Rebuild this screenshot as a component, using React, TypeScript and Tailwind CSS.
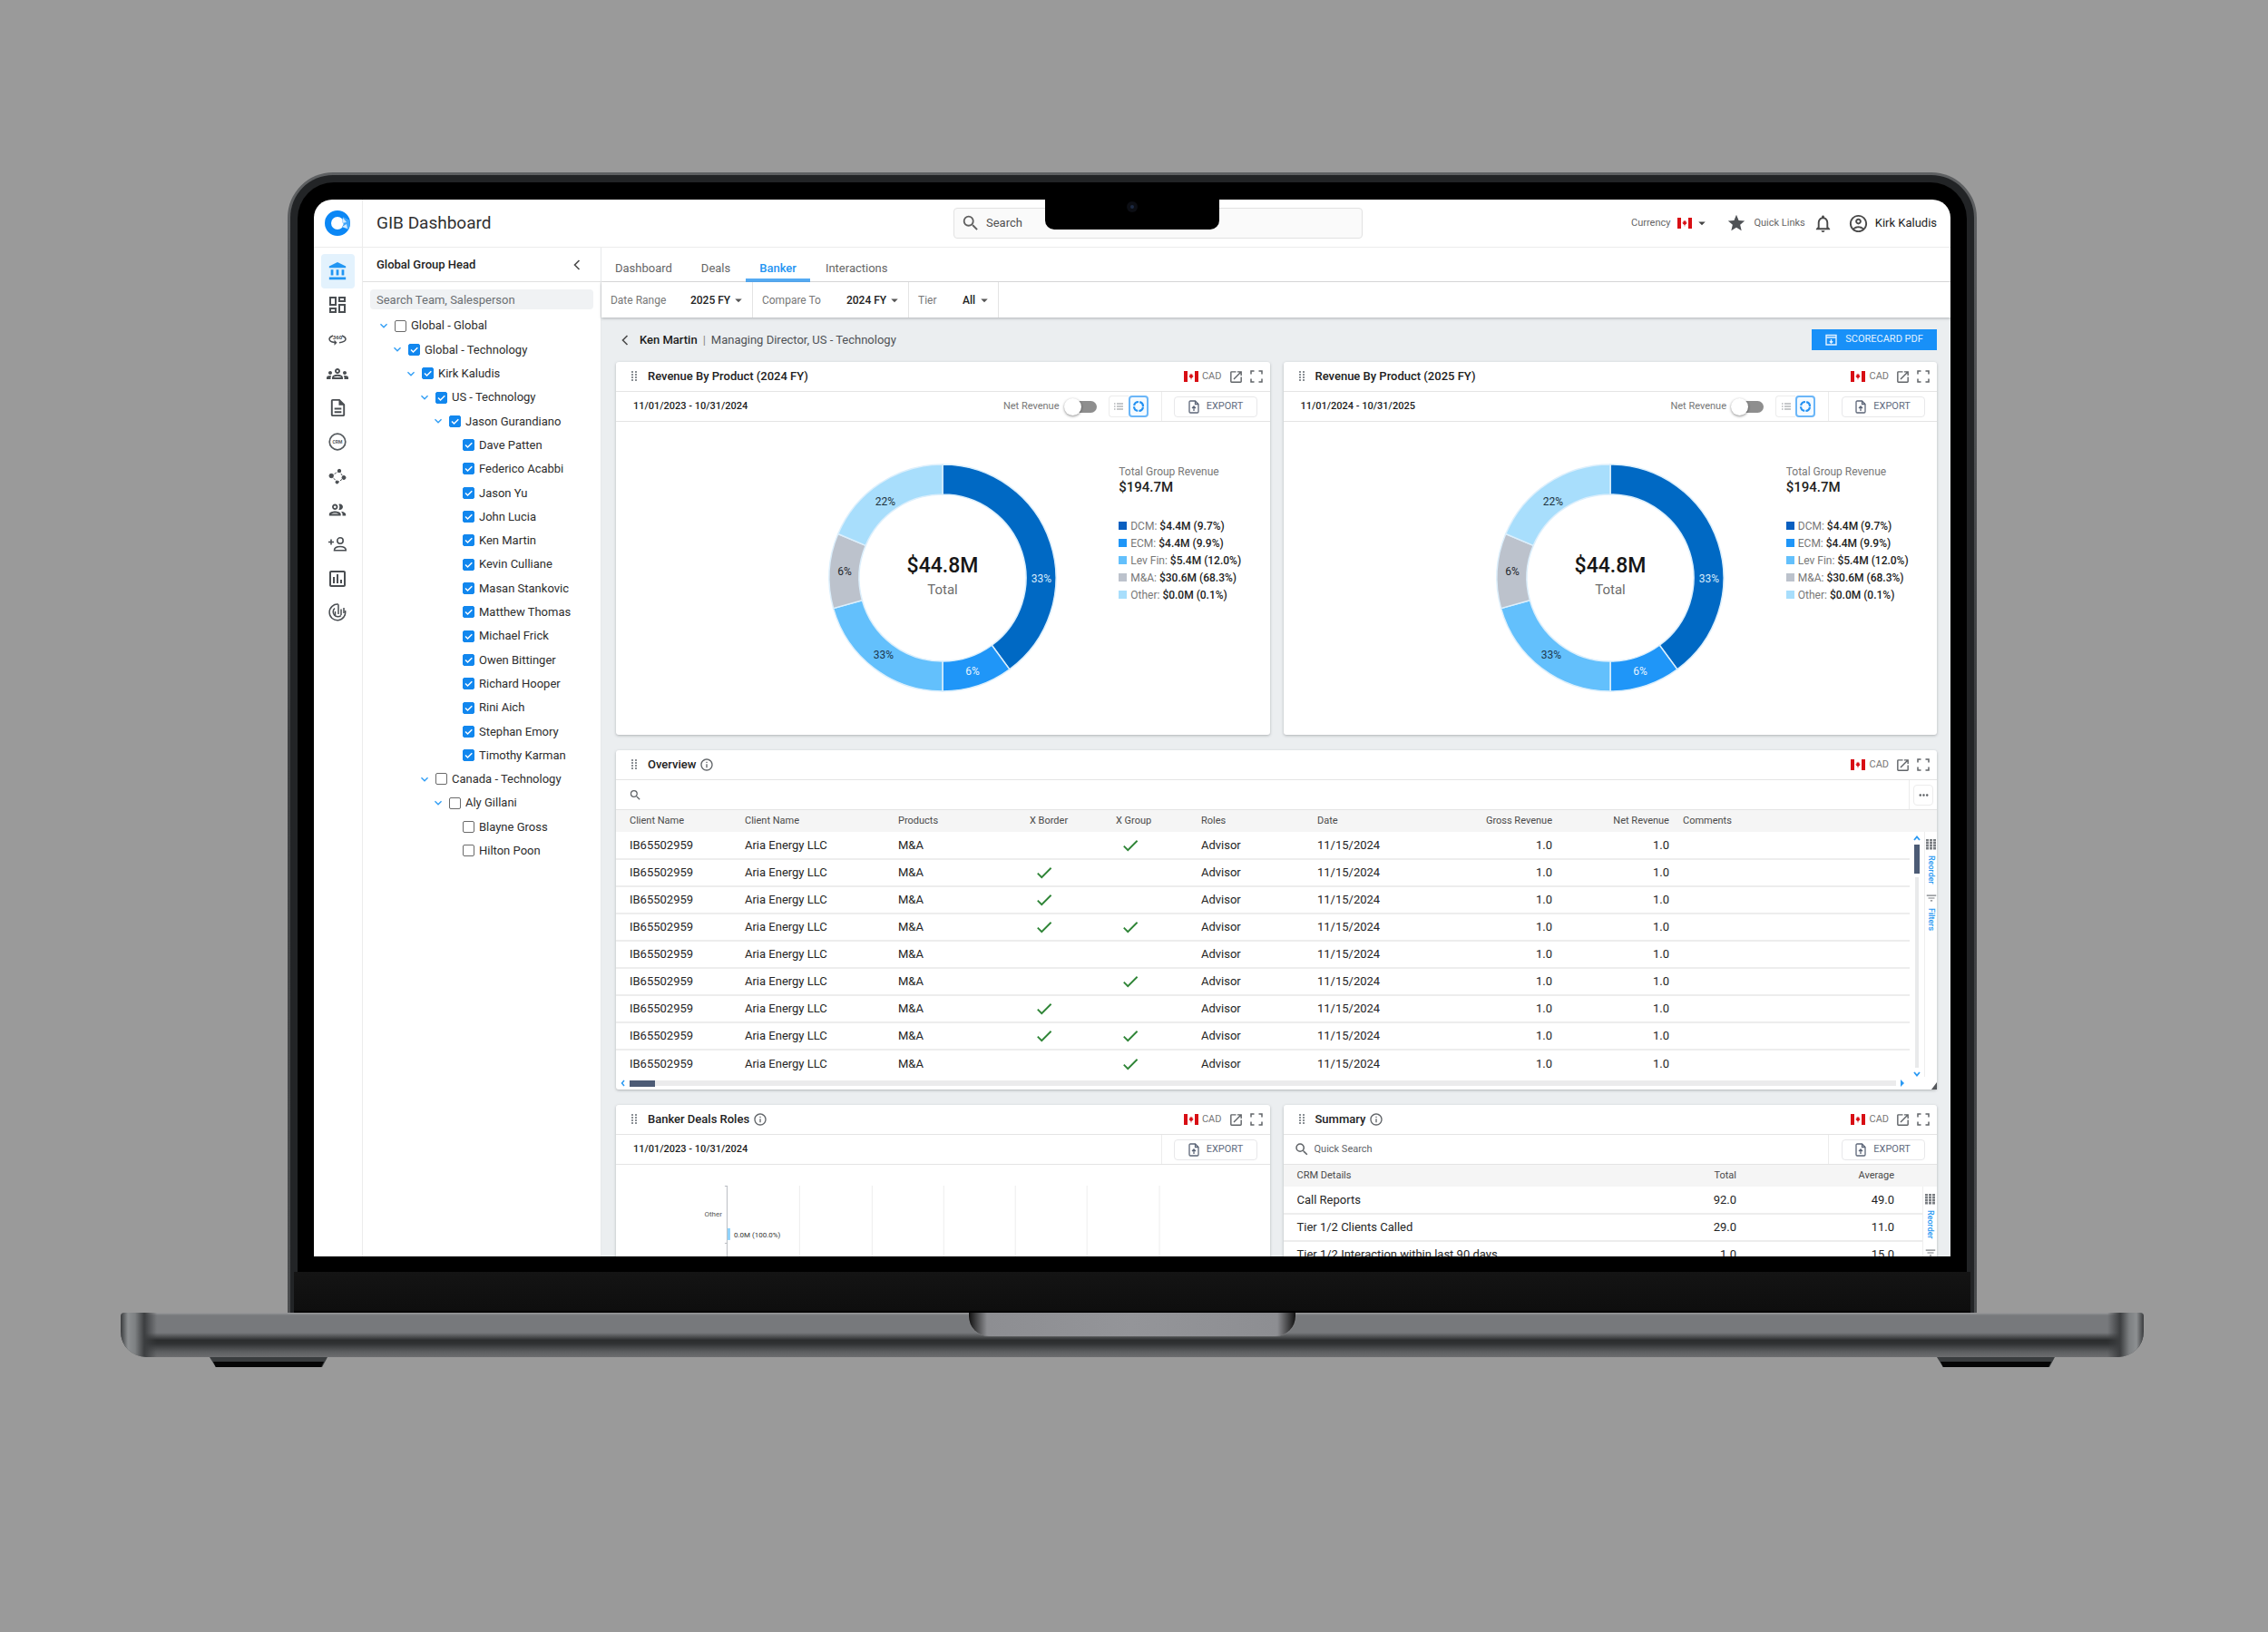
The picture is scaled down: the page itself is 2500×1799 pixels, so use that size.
import type { ReactNode } from "react";
import {
  MdAccountBalance,
  MdArrowDropDown,
  MdCheck,
  MdFilterList,
  MdKeyboardArrowDown,
  MdMoreHoriz,
  MdNotificationsNone,
  MdOpenInNew,
  MdOutlineAccountCircle,
  MdOutlineDashboard,
  MdOutlineDescription,
  MdOutlineGroup,
  MdOutlineGroups,
  MdOutlineInfo,
  MdOutlineInsertChart,
  MdSearch,
  MdStar,
} from "react-icons/md";

/* ---------- icons ---------- */

function Logo() {
  return (
    <svg viewBox="0 0 28 28" className="size-7">
      <circle cx="14" cy="14" r="10.500" fill="none" stroke="#0b87f5" strokeWidth="7" />
      <path d="M20 7l7 3.500a14 14 0 0 1-1 11L19 18l2-3-2-2z" fill="#3fa5fa" />
      <path d="M20 8l4 5-5 1zM19 18l5-3 1 5z" fill="#d3eafe" />
    </svg>
  );
}

function Flag() {
  return (
    <svg viewBox="0 0 16 12" className="h-3 w-4 shrink-0" aria-label="Canada">
      <path d="M0 0h16v12H0z" fill="#fff" />
      <path d="M0 0h4v12H0zM12 0h4v12h-4z" fill="#d80e14" />
      <path d="M8 2.500l.8 1.500.9-.4-.3 2 1.100-.5-.4 1.400L8.300 8v1.500h-.6V8L5.900 6.500l-.4-1.400 1.100.5-.3-2 .9.400z" fill="#d80e14" />
    </svg>
  );
}

function DragHandle() {
  return (
    <svg viewBox="0 0 6 12" className="h-3 w-1.5 shrink-0" fill="#8a8f94">
      {[0, 3, 6, 9].map((y) => (
        <g key={y}>
          <rect x="0" y={y} width="2" height="2" />
          <rect x="4" y={y} width="2" height="2" />
        </g>
      ))}
    </svg>
  );
}

function ChevronLeft({ className }: { className: string }) {
  return (
    <svg viewBox="0 0 8 12" className={className} fill="none" stroke="#4a4a4a" strokeWidth="1.600">
      <path d="M6.500 1L1.500 6l5 5" />
    </svg>
  );
}

function FullscreenIcon() {
  return (
    <svg viewBox="0 0 14 14" className="size-3.5" fill="none" stroke="#606468" strokeWidth="1.500">
      <path d="M1 4.500V1h3.500M9.500 1H13v3.500M13 9.500V13H9.500M4.500 13H1V9.500" />
    </svg>
  );
}

function ExportIcon() {
  return (
    <svg viewBox="0 0 12 15" className="h-[15px] w-3" fill="none" stroke="#5c6678" strokeWidth="1.300">
      <path d="M7.500 1H2.200C1.500 1 1 1.500 1 2.200v10.600c0 .7.500 1.200 1.200 1.200h7.600c.7 0 1.200-.5 1.200-1.200V4.500z" />
      <path d="M7.500 1v3.500H11M6 12V7M4 9l2-2 2 2" />
    </svg>
  );
}

function View360Icon() {
  return (
    <svg viewBox="0 0 20 14" className="h-3.5 w-5" fill="none" stroke="#4a4e52" strokeWidth="1.500">
      <path d="M5 3C2.500 4 1 5.300 1 6.700c0 1.800 2.500 3.300 6 3.900M15 3c2.500 1 4 2.300 4 3.700 0 1.900-3 3.500-7 4" />
      <path d="M6.500 7.500l3 3.200-3 3z" fill="#4a4e52" stroke="none" />
      <text x="10" y="6.500" textAnchor="middle" fontSize="6" fontWeight="700" fontFamily="Roboto, sans-serif" fill="#4a4e52" stroke="none">
        360
      </text>
    </svg>
  );
}

function CrmIcon() {
  return (
    <svg viewBox="0 0 20 20" className="size-5" fill="none" stroke="#555a5e" strokeWidth="1.700">
      <circle cx="10" cy="10" r="8.800" />
      <text x="10" y="12" textAnchor="middle" fontSize="5" fontWeight="700" fontFamily="Roboto, sans-serif" fill="#555a5e" stroke="none">
        CRM
      </text>
    </svg>
  );
}

function NetworkIcon() {
  return (
    <svg viewBox="0 0 20 18" className="h-[18px] w-5" fill="#4a4e52" stroke="#4a4e52">
      <path d="M3.500 8.500L12 3M3.500 8.500L10 16M12 3l5 8M10 16l7-5" fill="none" strokeWidth="1" strokeDasharray="2.500 1.200" />
      <circle cx="3.200" cy="8.500" r="2.200" />
      <circle cx="12" cy="3" r="1.700" />
      <circle cx="17" cy="10.500" r="2" />
      <circle cx="9.500" cy="15.500" r="1.500" />
    </svg>
  );
}

function AddPersonIcon() {
  return (
    <svg viewBox="0 0 20 18" className="h-[18px] w-5" fill="none" stroke="#4a4e52" strokeWidth="1.600">
      <circle cx="13" cy="5" r="3.200" />
      <path d="M6.500 15.800c0-3 3-4.300 6.500-4.300s6.300 1.300 6.300 4.300z" />
      <path d="M3 3.500v6M0 6.500h6" />
    </svg>
  );
}

function RadarIcon() {
  return (
    <svg viewBox="0 0 20 20" className="size-5" fill="none" stroke="#4a4e52" strokeWidth="1.500">
      <path d="M11 1.200A8.800 8.800 0 1 0 18.500 8M11 1.200V12" />
      <path d="M7 5.500a5.300 5.300 0 1 0 7 8M7.500 13V9M14 13V6.500M17 11V5" />
    </svg>
  );
}

function ReorderIcon() {
  return (
    <svg viewBox="0 0 12 12" className="size-3" fill="#7b7f83">
      {[0, 4, 8].map((x) =>
        [0, 3, 6, 9].map((y) => <rect key={`${x}-${y}`} x={x} y={y} width="3" height="2.500" />)
      )}
    </svg>
  );
}

/* ---------- data ---------- */

type Node = { name: string; level: number; checked: boolean; branch?: boolean };

const tree: Node[] = [
  { name: "Global - Global", level: 0, checked: false, branch: true },
  { name: "Global - Technology", level: 1, checked: true, branch: true },
  { name: "Kirk Kaludis", level: 2, checked: true, branch: true },
  { name: "US - Technology", level: 3, checked: true, branch: true },
  { name: "Jason Gurandiano", level: 4, checked: true, branch: true },
  ...[
    "Dave Patten",
    "Federico Acabbi",
    "Jason Yu",
    "John Lucia",
    "Ken Martin",
    "Kevin Culliane",
    "Masan Stankovic",
    "Matthew Thomas",
    "Michael Frick",
    "Owen Bittinger",
    "Richard Hooper",
    "Rini Aich",
    "Stephan Emory",
    "Timothy Karman",
  ].map((name) => ({ name, level: 5, checked: true })),
  { name: "Canada - Technology", level: 3, checked: false, branch: true },
  { name: "Aly Gillani", level: 4, checked: false, branch: true },
  { name: "Blayne Gross", level: 5, checked: false },
  { name: "Hilton Poon", level: 5, checked: false },
];

const deals = [
  [false, true],
  [true, false],
  [true, false],
  [true, true],
  [false, false],
  [false, true],
  [true, false],
  [true, true],
  [false, true],
];

const slices = [
  { from: 0, to: 143.8, color: "#0069c4" },
  { from: 143.8, to: 180, color: "#1f96f8" },
  { from: 180, to: 254.4, color: "#63c0fc" },
  { from: 254.4, to: 292.8, color: "#bcc2cc" },
  { from: 292.8, to: 360, color: "#a8defc" },
];

const sliceLabels = [
  { x: 234, y: 130, text: "33%", color: "#d5eafc" },
  { x: 158, y: 232, text: "6%", color: "#e4f3ff" },
  { x: 60, y: 214, text: "33%", color: "#1d3a52" },
  { x: 17, y: 122, text: "6%", color: "#25292e" },
  { x: 62, y: 45, text: "22%", color: "#1d3340" },
];

const legend = [
  { label: "DCM:", value: "$4.4M (9.7%)", swatch: "bg-[#0a5fc0]" },
  { label: "ECM:", value: "$4.4M (9.9%)", swatch: "bg-[#1f96f8]" },
  { label: "Lev Fin:", value: "$5.4M (12.0%)", swatch: "bg-[#63c0fc]" },
  { label: "M&A:", value: "$30.6M (68.3%)", swatch: "bg-[#bcc2cc]" },
  { label: "Other:", value: "$0.0M (0.1%)", swatch: "bg-[#a8defc]" },
];

/* ---------- header ---------- */

function TopBar() {
  return (
    <header className="flex h-[53px] shrink-0 items-stretch border-b border-[#ececec]">
      <div className="flex w-[54px] shrink-0 items-center justify-center border-r border-[#ececec]">
        <Logo />
      </div>
      <h1 className="flex w-[651px] shrink-0 items-center pl-[15px] text-[19px] text-[#303030]">GIB Dashboard</h1>
      <label className="flex h-[34px] w-[451px] items-center gap-1.5 self-center rounded-sm border border-[#e2e2e2] bg-[#fafafa] pl-[7px]">
        <MdSearch className="size-[22px] shrink-0 text-[#606060]" />
        <input
          type="text"
          placeholder="Search"
          aria-label="Search"
          className="w-full bg-transparent text-[13px] outline-none placeholder:text-[#505050]"
        />
      </label>
      <div className="ml-auto flex items-center pr-[15px] text-[11px] text-[#666]">
        <button className="flex items-center gap-2">
          Currency
          <span className="flex items-center">
            <Flag />
            <MdArrowDropDown className="ml-0.5 size-[18px] text-[#444]" />
          </span>
        </button>
        <button className="ml-[18px] flex items-center gap-2">
          <MdStar className="size-[22px] text-[#4f5256]" />
          Quick Links
        </button>
        <button aria-label="Notifications" className="ml-2">
          <MdNotificationsNone className="size-[23px] text-[#4a4a4a]" />
        </button>
        <button className="ml-4 flex items-center gap-[7px] text-[13px] text-[#222]">
          <MdOutlineAccountCircle className="size-[23px] text-[#4a4a4a]" />
          Kirk Kaludis
        </button>
      </div>
    </header>
  );
}

const railItems: { name: string; icon: ReactNode }[] = [
  { name: "Bank", icon: <MdAccountBalance className="size-[22px] text-[#2196f3]" /> },
  { name: "Dashboard", icon: <MdOutlineDashboard className="size-6" /> },
  { name: "Client 360", icon: <View360Icon /> },
  { name: "Teams", icon: <MdOutlineGroups className="size-6" /> },
  { name: "Documents", icon: <MdOutlineDescription className="size-[23px]" /> },
  { name: "CRM", icon: <CrmIcon /> },
  { name: "Network", icon: <NetworkIcon /> },
  { name: "People", icon: <MdOutlineGroup className="size-[22px]" /> },
  { name: "Add contact", icon: <AddPersonIcon /> },
  { name: "Reports", icon: <MdOutlineInsertChart className="size-6" /> },
  { name: "Insights", icon: <RadarIcon /> },
];

function Rail() {
  return (
    <nav aria-label="Main" className="w-[54px] shrink-0 border-r border-[#ececec] px-2 pt-[7px]">
      <div className="grid h-[414px] auto-rows-fr">
        {railItems.map((item, i) => (
          <button
            key={item.name}
            aria-label={item.name}
            className={
              i === 0
                ? "flex items-center justify-center rounded bg-[#e3f2fd]"
                : "flex items-center justify-center text-[#4a4e52]"
            }
          >
            {item.icon}
          </button>
        ))}
      </div>
    </nav>
  );
}

const indents = ["pl-[15px]", "pl-[30px]", "pl-[45px]", "pl-[60px]", "pl-[75px]", "pl-[90px]"];

function Sidebar() {
  return (
    <aside className="w-[262px] shrink-0">
      <div className="flex h-[38px] items-center justify-between border-b border-[#e0e0e0] pl-[15px] pr-[22px]">
        <h2 className="text-[13px] font-medium text-[#222]">Global Group Head</h2>
        <button aria-label="Collapse">
          <ChevronLeft className="h-3 w-2" />
        </button>
      </div>
      <div className="px-2 pt-2 pb-[5px]">
        <input
          type="text"
          placeholder="Search Team, Salesperson"
          aria-label="Search Team, Salesperson"
          className="block h-[22px] w-full rounded-sm bg-[#f0f2f4] px-[7px] text-[13px] outline-none placeholder:text-[#6b6f73]"
        />
      </div>
      <div className="grid h-[605px] auto-rows-fr">
        {tree.map((n) => (
          <div key={n.name} className={`flex items-center ${indents[n.level]}`}>
            <span className="w-5 shrink-0">
              {n.branch && (
                <button aria-label={`Toggle ${n.name}`} className="block">
                  <MdKeyboardArrowDown className="size-4 text-[#2f9df5]" />
                </button>
              )}
            </span>
            <label className="flex items-center gap-[5px] text-[13px] text-[#2d2d2d]">
              <span className="relative size-[13px]">
                <input
                  type="checkbox"
                  defaultChecked={n.checked}
                  className="peer block size-[13px] appearance-none rounded-[2px] border-[1.5px] border-[#6a6a6a] checked:border-[#1287ee] checked:bg-[#1287ee]"
                />
                <svg
                  viewBox="0 0 13 13"
                  className="pointer-events-none absolute inset-0 hidden size-[13px] peer-checked:block"
                  fill="none"
                  stroke="#fff"
                  strokeWidth="1.500"
                >
                  <path d="M3 6.500L5.500 9 10.300 4.200" />
                </svg>
              </span>
              {n.name}
            </label>
          </div>
        ))}
      </div>
    </aside>
  );
}

/* ---------- cards ---------- */

function Card({
  title,
  info,
  toolbar,
  children,
}: {
  title: string;
  info?: boolean;
  toolbar: ReactNode;
  children: ReactNode;
}) {
  return (
    <section className="rounded-[3px] bg-white shadow-[0_1px_3px_rgba(60,65,70,0.350)]">
      <div className="flex h-[33px] items-center border-b border-[#e4e4e4] pl-[17px] pr-2">
        <DragHandle />
        <h3 className="ml-3 text-[13px] font-medium text-[#222]">{title}</h3>
        {info && <MdOutlineInfo className="ml-1 size-4 text-[#606468]" />}
        <div className="ml-auto flex items-center text-[11px] text-[#777]">
          <Flag />
          <span className="ml-1">CAD</span>
          <button aria-label="Open in new window" className="ml-[7px]">
            <MdOpenInNew className="size-[17px] text-[#606468]" />
          </button>
          <button aria-label="Full screen" className="ml-[7px]">
            <FullscreenIcon />
          </button>
        </div>
      </div>
      <div className="flex h-[33px] items-stretch border-b border-[#e4e4e4]">{toolbar}</div>
      {children}
    </section>
  );
}

function ExportCell() {
  return (
    <div className="flex w-[120px] shrink-0 items-center justify-center border-l border-[#ececec]">
      <button className="flex h-[23px] w-[92px] items-center justify-center gap-2 rounded-sm border border-[#e8e8ea] text-[11px] text-[#5f6b80]">
        <ExportIcon />
        EXPORT
      </button>
    </div>
  );
}

function DateText({ children }: { children: ReactNode }) {
  return <div className="flex flex-1 items-center pl-[19px] text-[11px] font-medium text-[#1c1c1c]">{children}</div>;
}

function arc(from: number, to: number) {
  const pt = (deg: number, r: number) => {
    const a = ((deg - 90) * Math.PI) / 180;
    return `${125 + r * Math.cos(a)} ${125 + r * Math.sin(a)}`;
  };
  const large = to - from > 180 ? 1 : 0;
  return `M${pt(from, 125)}A125 125 0 ${large} 1 ${pt(to, 125)}L${pt(to, 92)}A92 92 0 ${large} 0 ${pt(from, 92)}Z`;
}

function Donut() {
  return (
    <svg viewBox="0 0 250 250" className="h-[250px] w-full overflow-visible" fontFamily="Roboto, sans-serif" textAnchor="middle">
      {slices.map((s) => (
        <path key={s.from} d={arc(s.from, s.to)} fill={s.color} stroke="#dceffc" strokeWidth="1.500" />
      ))}
      {sliceLabels.map((l) => (
        <text key={`${l.x}`} x={l.x} y={l.y} fontSize="12" fill={l.color}>
          {l.text}
        </text>
      ))}
      <text x="125" y="119" fontSize="23" fontWeight="500" fill="#161616">
        $44.8M
      </text>
      <text x="125" y="143" fontSize="15" fill="#6c6c6c">
        Total
      </text>
    </svg>
  );
}

function RevenueCard({ title, range }: { title: string; range: string }) {
  return (
    <Card
      title={title}
      toolbar={
        <>
          <DateText>{range}</DateText>
          <label className="flex items-center gap-[11px] text-[11px] text-[#777]">
            Net Revenue
            <input
              type="checkbox"
              role="switch"
              className="relative mr-[13px] h-[13px] w-[30px] appearance-none rounded-full bg-[#8e8e8e] before:absolute before:-top-[3px] before:-left-[6px] before:size-[19px] before:rounded-full before:bg-white before:shadow-[0_1px_3px_rgba(0,0,0,0.450)]"
            />
          </label>
          <div className="mr-[14px] flex items-center">
            <button
              aria-label="List view"
              className="flex h-6 w-[22px] items-center justify-center rounded-l-sm border border-r-0 border-[#ececec]"
            >
              <svg viewBox="0 0 10 8" className="h-2 w-2.5" stroke="#8d9196" strokeWidth="1.200">
                <path d="M0 1h1.500M3 1h7M0 4h1.500M3 4h7M0 7h1.500M3 7h7" />
              </svg>
            </button>
            <button
              aria-label="Chart view"
              className="flex h-6 w-[22px] items-center justify-center rounded-sm border-2 border-[#6bb6f8] bg-[#f4faff]"
            >
              <svg viewBox="0 0 14 14" className="size-3.5" fill="none" stroke="#2391f2" strokeWidth="2.200">
                <circle cx="7" cy="7" r="5" strokeDasharray="6.600 1.254" strokeDashoffset="7.227" />
              </svg>
            </button>
          </div>
          <ExportCell />
        </>
      }
    >
      <div className="grid grid-cols-[1fr_250px_1fr] pt-[47px] pb-12">
        <div className="col-start-2">
          <Donut />
        </div>
        <div className="pl-[69px]">
          <p className="text-[12px] leading-4 text-[#777]">Total Group Revenue</p>
          <p className="text-[15px] leading-[18px] font-medium text-[#222]">$194.7M</p>
          <ul className="mt-6">
            {legend.map((l) => (
              <li key={l.label} className="flex h-[19px] items-center text-[12px] whitespace-nowrap text-[#777]">
                <span className={`mr-1 size-[9px] ${l.swatch}`} />
                {l.label}
                <span className="ml-[3px] font-medium text-[#222]">{l.value}</span>
              </li>
            ))}
          </ul>
        </div>
      </div>
    </Card>
  );
}

function SideTools() {
  return (
    <div className="flex w-4 flex-col items-center border-l border-[#eee] pt-2 text-[9px] font-medium text-[#2b9af3]">
      <ReorderIcon />
      <button className="mt-1.5 leading-none [writing-mode:vertical-rl]">Reorder</button>
      <MdFilterList className="mt-2 size-[14px] text-[#7b7f83]" />
      <button className="mt-1 leading-none [writing-mode:vertical-rl]">Filters</button>
    </div>
  );
}

const headClass = "pl-[15px] text-left font-normal";

function Overview() {
  return (
    <Card
      title="Overview"
      info
      toolbar={
        <>
          <label className="flex flex-1 items-center pl-3.5">
            <MdSearch className="size-[15px] text-[#606468]" />
            <input type="text" aria-label="Search overview" className="ml-2 w-full bg-transparent text-[13px] outline-none" />
          </label>
          <div className="flex w-[31px] items-center justify-center border-l border-[#ececec]">
            <button aria-label="More" className="flex h-[23px] w-[22px] items-center justify-center rounded-sm border border-[#ececec]">
              <MdMoreHoriz className="size-[15px] text-[#606468]" />
            </button>
          </div>
        </>
      }
    >
      <div className="grid grid-cols-[1fr_16px_14px]">
        <table className="w-full table-fixed border-collapse">
          <colgroup>
            <col className="w-[127px]" />
            <col className="w-[169px]" />
            <col className="w-[145px]" />
            <col className="w-[95px]" />
            <col className="w-[94px]" />
            <col className="w-[128px]" />
            <col className="w-[144px]" />
            <col className="w-[130px]" />
            <col className="w-[129px]" />
            <col />
          </colgroup>
          <thead>
            <tr className="h-6 bg-[#f5f5f5] text-[11px] text-[#4a4a4a]">
              <th className={headClass}>Client Name</th>
              <th className={headClass}>Client Name</th>
              <th className={headClass}>Products</th>
              <th className={headClass}>X Border</th>
              <th className={headClass}>X Group</th>
              <th className={headClass}>Roles</th>
              <th className={headClass}>Date</th>
              <th className="text-right font-normal">Gross Revenue</th>
              <th className="text-right font-normal">Net Revenue</th>
              <th className={headClass}>Comments</th>
            </tr>
          </thead>
          <tbody className="text-[13px] text-[#252525]">
            {deals.map(([border, group], i) => (
              <tr key={i} className={i < deals.length - 1 ? "h-[30px] border-b-2 border-[#ededed]" : "h-[30px]"}>
                <td className="pl-[15px]">IB65502959</td>
                <td className="pl-[15px]">Aria Energy LLC</td>
                <td className="pl-[15px]">M&amp;A</td>
                <td className="pl-5">{border && <MdCheck aria-label="Yes" className="size-[22px] text-[#2e8436]" />}</td>
                <td className="pl-5">{group && <MdCheck aria-label="Yes" className="size-[22px] text-[#2e8436]" />}</td>
                <td className="pl-[15px]">Advisor</td>
                <td className="pl-[15px]">11/15/2024</td>
                <td className="text-right">1.0</td>
                <td className="text-right">1.0</td>
                <td />
              </tr>
            ))}
          </tbody>
        </table>
        <div className="flex flex-col">
          <div className="h-6 bg-[#f5f5f5]" />
          <div className="flex flex-1 flex-col items-center pt-1">
            <svg viewBox="0 0 8 6" className="h-1.5 w-2" fill="none" stroke="#2b9af3" strokeWidth="1.800">
              <path d="M1 5l3-3.500L7 5" />
            </svg>
            <div className="mt-1 h-8 w-1.5 bg-[#4c5b75]" />
            <div className="mt-1 w-1 flex-1 bg-[#e9eaeb]" />
            <svg viewBox="0 0 8 6" className="mt-1 h-1.5 w-2" fill="none" stroke="#2b9af3" strokeWidth="1.800">
              <path d="M1 1l3 3.500L7 1" />
            </svg>
          </div>
        </div>
        <div className="flex flex-col">
          <div className="h-6 bg-[#f5f5f5]" />
          <div className="flex flex-1 justify-center">
            <SideTools />
          </div>
        </div>
      </div>
      <div className="flex h-[14px] items-center pl-[5px]">
        <svg viewBox="0 0 5 8" className="h-2 w-[5px]" fill="none" stroke="#2b9af3" strokeWidth="1.500">
          <path d="M4 1L1.500 4 4 7" />
        </svg>
        <div className="ml-[5px] h-[7px] w-7 bg-[#4c5b75]" />
        <div className="h-1.5 flex-1 bg-[#ebebec]" />
        <svg viewBox="0 0 5 8" className="ml-1 h-2 w-[5px]" fill="#2b9af3">
          <path d="M1 0l4 4-4 4z" />
        </svg>
        <svg viewBox="0 0 6 8" className="ml-[30px] h-2 w-1.5 self-end" fill="#55585c">
          <path d="M6 0v8H0z" />
        </svg>
      </div>
    </Card>
  );
}

function DealRoles() {
  return (
    <Card
      title="Banker Deals Roles"
      info
      toolbar={
        <>
          <DateText>11/01/2023 - 10/31/2024</DateText>
          <ExportCell />
        </>
      }
    >
      <svg viewBox="0 0 721 250" className="block w-full" fontFamily="Roboto, sans-serif" fontSize="8">
        {[202, 282, 361, 440, 519, 599].map((x) => (
          <path key={x} d={`M${x}.500 23V250`} stroke="#ededed" />
        ))}
        <path d="M122.500 23V250M120 23.500h3M120 86.500h3" stroke="#b9bdc2" fill="none" />
        <text x="117" y="57" textAnchor="end" fill="#555">
          Other
        </text>
        <rect x="123" y="70" width="3" height="13" fill="#8fd2fb" />
        <text x="130" y="80" fill="#333">
          0.0M (100.0%)
        </text>
      </svg>
    </Card>
  );
}

const summary = [
  ["Call Reports", "92.0", "49.0"],
  ["Tier 1/2 Clients Called", "29.0", "11.0"],
  ["Tier 1/2 Interaction within last 90 days", "1.0", "15.0"],
];

function Summary() {
  return (
    <Card
      title="Summary"
      info
      toolbar={
        <>
          <label className="flex flex-1 items-center pl-[11px]">
            <MdSearch className="size-[18px] shrink-0 text-[#606468]" />
            <input
              type="text"
              placeholder="Quick Search"
              aria-label="Quick Search"
              className="ml-[5px] w-full bg-transparent text-[11px] outline-none placeholder:text-[#606468]"
            />
          </label>
          <ExportCell />
        </>
      }
    >
      <div className="grid grid-cols-[1fr_16px]">
        <table className="w-full table-fixed self-start border-collapse">
          <colgroup>
            <col />
            <col className="w-[140px]" />
            <col className="w-[174px]" />
            <col className="w-[31px]" />
          </colgroup>
          <thead>
            <tr className="h-6 bg-[#f5f5f5] text-[11px] text-[#4a4a4a]">
              <th className={headClass}>CRM Details</th>
              <th className="text-right font-normal">Total</th>
              <th className="text-right font-normal">Average</th>
              <th aria-hidden="true" />
            </tr>
          </thead>
          <tbody className="text-[13px] text-[#252525]">
            {summary.map(([name, total, average]) => (
              <tr key={name} className="h-[30px] border-b-2 border-[#ededed]">
                <td className="pl-[15px]">{name}</td>
                <td className="text-right">{total}</td>
                <td className="text-right">{average}</td>
                <td />
              </tr>
            ))}
          </tbody>
        </table>
        <div className="flex flex-col">
          <div className="h-6 bg-[#f5f5f5]" />
          <div className="flex flex-1">
            <SideTools />
          </div>
        </div>
      </div>
    </Card>
  );
}

/* ---------- main area ---------- */

function Filter({ label, value, width, selectWidth }: { label: string; value: string; width: string; selectWidth: string }) {
  return (
    <label className={`flex items-center justify-between border-r border-[#e4e4e4] px-2.5 text-[12px] text-[#777] ${width}`}>
      {label}
      <span className={`relative flex items-center ${selectWidth}`}>
        <select className="w-full appearance-none bg-transparent font-medium text-[#222] outline-none">
          <option>{value}</option>
        </select>
        <MdArrowDropDown className="pointer-events-none absolute -right-1 size-[18px] text-[#555]" />
      </span>
    </label>
  );
}

function Main() {
  return (
    <main className="flex min-w-0 flex-1 flex-col border-l border-[#e6e8ea] bg-[#ebeef0]">
      <nav
        aria-label="Sections"
        className="flex h-[38px] shrink-0 items-stretch gap-0.5 border-b border-[#e0e0e0] bg-white text-[13px] text-[#666]"
      >
        {["Dashboard", "Deals", "Banker", "Interactions"].map((t) => (
          <a
            key={t}
            href={`#${t.toLowerCase()}`}
            className={
              t === "Banker"
                ? "-mb-px flex items-end border-b-4 border-[#55abf3] px-[15px] pb-0.5 font-medium text-[#2394f2]"
                : "flex items-end px-[15px] pb-[5px]"
            }
          >
            {t}
          </a>
        ))}
      </nav>
      <div className="flex h-[39px] shrink-0 items-stretch bg-white shadow-[0_1px_3px_rgba(60,65,70,0.350)]">
        <Filter label="Date Range" value="2025 FY" width="w-[167px]" selectWidth="w-[58px]" />
        <Filter label="Compare To" value="2024 FY" width="w-[172px]" selectWidth="w-[58px]" />
        <Filter label="Tier" value="All" width="w-[99px]" selectWidth="w-[29px]" />
      </div>
      <div className="pr-[15px] pl-4">
        <div className="flex h-[49px] items-center text-[13px] text-[#4f5256]">
          <button aria-label="Back" className="ml-1.5">
            <ChevronLeft className="h-3 w-2" />
          </button>
          <span className="ml-3 font-medium text-[#1c1c1c]">Ken Martin</span>
          <span className="mx-1.5 text-[#888]">|</span>
          <span>Managing Director, US - Technology</span>
          <button className="ml-auto flex h-[23px] w-[138px] items-center justify-center gap-[9px] bg-[#1890f8] text-[11px] text-[#e3f2ff]">
            <svg viewBox="0 0 13 13" className="size-[13px]" fill="none" stroke="#e3f2ff" strokeWidth="1.400">
              <path d="M1 1.500h11v10.500H1zM1 4h11M6.500 10V6M4.800 8.300l1.700 1.700 1.700-1.700" />
            </svg>
            SCORECARD PDF
          </button>
        </div>
        <div className="grid grid-cols-2 gap-x-[15px] gap-y-[17px]">
          <RevenueCard title="Revenue By Product (2024 FY)" range="11/01/2023 - 10/31/2024" />
          <RevenueCard title="Revenue By Product (2025 FY)" range="11/01/2024 - 10/31/2025" />
          <div className="col-span-2">
            <Overview />
          </div>
          <DealRoles />
          <Summary />
        </div>
      </div>
    </main>
  );
}

/* ---------- laptop ---------- */

function Foot() {
  return (
    <svg viewBox="0 0 132 11" className="h-[11px] w-[130px]">
      <path d="M0 0h132l-6 11H7z" fill="#3a3d3f" />
      <path d="M4 5h124l-3 6H7z" fill="#060606" />
    </svg>
  );
}

export default function App() {
  return (
    <div className="min-h-screen bg-[#9a9a9a] pt-[190px] pr-[5.480%] pl-[5.320%] font-[Roboto,'Open_Sans',sans-serif]">
      <div className="mx-[8.250%] rounded-t-[50px] bg-linear-to-b from-[#5e6062] via-[#3b3d3f] to-[#4a4c4e] p-[3px] pb-0">
        <div className="rounded-t-[47px] bg-[#222426] px-2 pt-2">
          <div className="rounded-t-[40px] bg-black px-[18px] pt-[19px] pb-[17px]">
            <div className="relative flex aspect-[1805/1166] flex-col overflow-hidden rounded-t-[20px] bg-white">
              <TopBar />
              <div className="flex min-h-0 flex-1 overflow-hidden">
                <Rail />
                <Sidebar />
                <Main />
              </div>
              <div className="absolute top-0 left-1/2 flex h-[33px] w-[192px] -translate-x-1/2 justify-center rounded-b-[10px] bg-black pt-0.5">
                <span className="flex size-3 items-center justify-center rounded-full bg-[#0c0e14]">
                  <span className="size-1 rounded-full bg-[#1d2a44]" />
                </span>
              </div>
            </div>
          </div>
          <div className="-mx-1 h-[45px] border-b-2 border-black bg-linear-to-b from-[#141414] to-[#0e0e0e]" />
        </div>
      </div>
      <div className="relative flex h-[49px] justify-center overflow-hidden rounded-t-[4px] rounded-b-[28px] bg-[linear-gradient(to_bottom,#9b9c9e_0,#77797c_3px,#77797c_45%,#2b2d2e_62%,#303234_70%,#5c5e60_88%,#6d6e70_100%)]">
        <div className="absolute inset-y-0 left-0 w-10 bg-[linear-gradient(to_right,#3a3c3e,#8d9092_20%,#7d8082_40%,#3c3e40_65%,transparent)]" />
        <div className="absolute inset-y-0 right-0 w-10 bg-[linear-gradient(to_left,#3a3c3e,#8d9092_20%,#7d8082_40%,#3c3e40_65%,transparent)]" />
        <div className="relative h-[26px] w-[360px] rounded-b-[22px] bg-[linear-gradient(to_right,#111,#8d8e92_20px,#949599_50%,#8d8e92_340px,#111)] shadow-[0_0_1px_#b0b0b0]" />
      </div>
      <div className="flex justify-between px-[98px]">
        <Foot />
        <Foot />
      </div>
    </div>
  );
}
